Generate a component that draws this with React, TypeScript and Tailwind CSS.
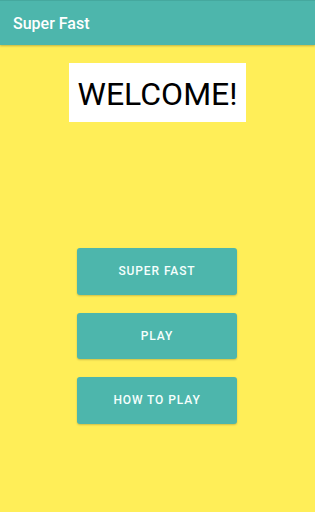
import React from "react";

export default function App() {
  const buttons = ["SUPER FAST", "PLAY", "HOW TO PLAY"];
  return (
    <div
      className="w-[315px] h-[512px] bg-[#ffee58] flex flex-col overflow-hidden"
      style={{ fontFamily: "Roboto, 'Noto Sans', sans-serif" }}
    >
      <div className="h-[45px] shrink-0 bg-[#4db6ac] border-t border-[#45a89e] flex items-center pl-[13px] shadow-[0_1px_2px_rgba(0,0,0,0.25)] relative z-10">
        <span className="text-white text-[16px] font-medium leading-none mt-[1px]">Super Fast</span>
      </div>
      <div className="flex flex-col items-center pr-[1px]">
        <div className="mt-[18px] w-[177px] h-[59px] bg-white flex items-center justify-center">
          <span className="text-black text-[32px] leading-none mt-[2px] ml-[1px]">WELCOME!</span>
        </div>
        <div className="mt-[126px] flex flex-col gap-[18px]">
          {buttons.map((b) => (
            <div
              key={b}
              className="w-[160px] h-[46.5px] bg-[#4db6ac] rounded-[3px] shadow-[0_1px_2px_rgba(0,0,0,0.2)] flex items-center justify-center"
            >
              <span className="text-[#f5fffd] text-[12px] font-medium tracking-[0.9px] leading-none">{b}</span>
            </div>
          ))}
        </div>
      </div>
    </div>
  );
}
